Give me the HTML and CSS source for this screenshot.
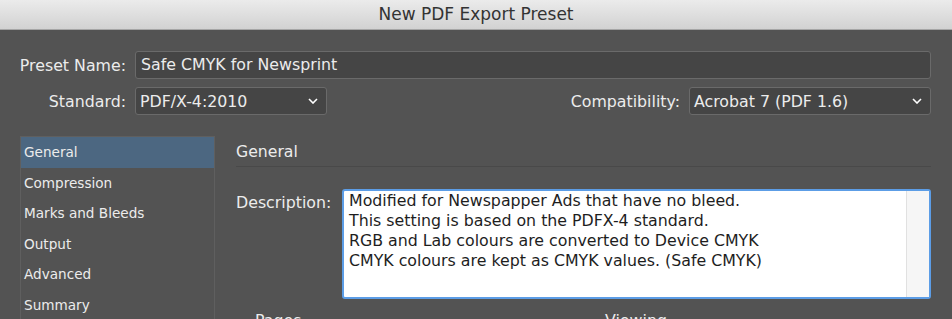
FILE: index.html
```html
<!DOCTYPE html>
<html>
<head>
    <title>New PDF Export Preset</title>
    <link rel="stylesheet" href="styles.css">
</head>
<body>
    <div class="titlebar">New PDF Export Preset</div>

    <div class="dialog">
        <div class="row">
            <label class="label">Preset Name:</label>
            <div class="field">Safe CMYK for Newsprint</div>
        </div>
        <div class="row">
            <label class="label">Standard:</label>
            <div class="select standard">
                <span>PDF/X-4:2010</span>
                <svg class="chevron" width="10" height="6" viewBox="0 0 10 6"><path d="M1 1 L5 5 L9 1" fill="none" stroke="#fff" stroke-width="1.6"/></svg>
            </div>
            <div class="spacer"></div>
            <label class="label-compat">Compatibility:</label>
            <div class="select compat">
                <span>Acrobat 7 (PDF 1.6)</span>
                <svg class="chevron" width="10" height="6" viewBox="0 0 10 6"><path d="M1 1 L5 5 L9 1" fill="none" stroke="#fff" stroke-width="1.6"/></svg>
            </div>
        </div>

        <div class="main">
            <ul class="nav">
                <li class="active">General</li>
                <li>Compression</li>
                <li>Marks and Bleeds</li>
                <li>Output</li>
                <li>Advanced</li>
                <li>Summary</li>
            </ul>
            <div class="panel">
                <h2>General</h2>
                <div class="desc-row">
                    <label class="desc-label">Description:</label>
                    <div class="textarea">
                        <div class="text">
                            Modified for Newspapper Ads that have no bleed.<br>
                            This setting is based on the PDFX-4 standard.<br>
                            RGB and Lab colours are converted to Device CMYK<br>
                            CMYK colours are kept as CMYK values. (Safe CMYK)
                        </div>
                        <div class="scroll"></div>
                    </div>
                </div>
                <div class="groups">
                    <span class="group-pages">Pages</span>
                    <span>Viewing</span>
                </div>
            </div>
        </div>
    </div>
</body>
</html>
```

FILE: styles.css
```css
html, body { height: 319px; overflow: hidden; }
body { margin: 0; background: #535353; color: #ececec; font-family: "DejaVu Sans", sans-serif; font-size: 15.8px; }

.titlebar { height: 29px; line-height: 29px; text-align: center; font-size: 17px; color: #333; background: linear-gradient(#ebebeb, #d2d2d2); border-bottom: 1px solid #a6a6a6; }

.dialog { padding: 21px 21px 0 16px; }
.row { display: flex; align-items: center; height: 28px; }
.row + .row { margin-top: 8px; }
.label { flex: none; width: 110px; margin-right: 9px; text-align: right; white-space: nowrap; }
.label-compat { margin-right: 9px; white-space: nowrap; }
.spacer { flex: 1; }

.field { flex: 1; height: 28px; box-sizing: border-box; line-height: 26px; padding-left: 5px; background: #454545; border: 1px solid #6a6a6a; border-radius: 3px; }
.select { display: flex; align-items: center; justify-content: space-between; height: 28px; box-sizing: border-box; padding: 0 8px 0 4px; background: #454545; border: 1px solid #6a6a6a; border-radius: 3px; }
.standard { width: 192px; }
.compat { width: 242px; }
.chevron { display: block; }

.main { display: flex; margin-top: 21px; margin-left: 4px; }
.nav { flex: none; width: 195px; height: 200px; box-sizing: border-box; margin: 0; padding: 0; list-style: none; border: 1px solid #5f5f5f; border-bottom: none; font-size: 13.6px; }
.nav li { height: 30.5px; line-height: 31px; padding-left: 3px; }
.nav li.active { background: #4c6781; }

.panel { flex: 1; margin-left: 21px; }
.panel h2 { margin: 0; height: 30px; line-height: 31px; font-size: 15.7px; font-weight: normal; border-bottom: 1px solid #494949; }

.desc-row { display: flex; margin-top: 22px; }
.desc-label { flex: none; width: 97px; margin-right: 9px; padding-top: 4px; line-height: 20px; white-space: nowrap; }
.textarea { flex: 1; display: flex; height: 110px; box-sizing: border-box; background: #fff; border: 2px solid #5c9de6; border-radius: 3px; color: #1e1e1e; }
.textarea .text { flex: 1; padding: 0 5px; line-height: 20px; }
.scroll { width: 22px; background: #f6f6f6; border-left: 1px solid #e1e1e1; }

.groups { display: flex; margin-top: 12px; padding-left: 19px; }
.group-pages { width: 350px; }
```
